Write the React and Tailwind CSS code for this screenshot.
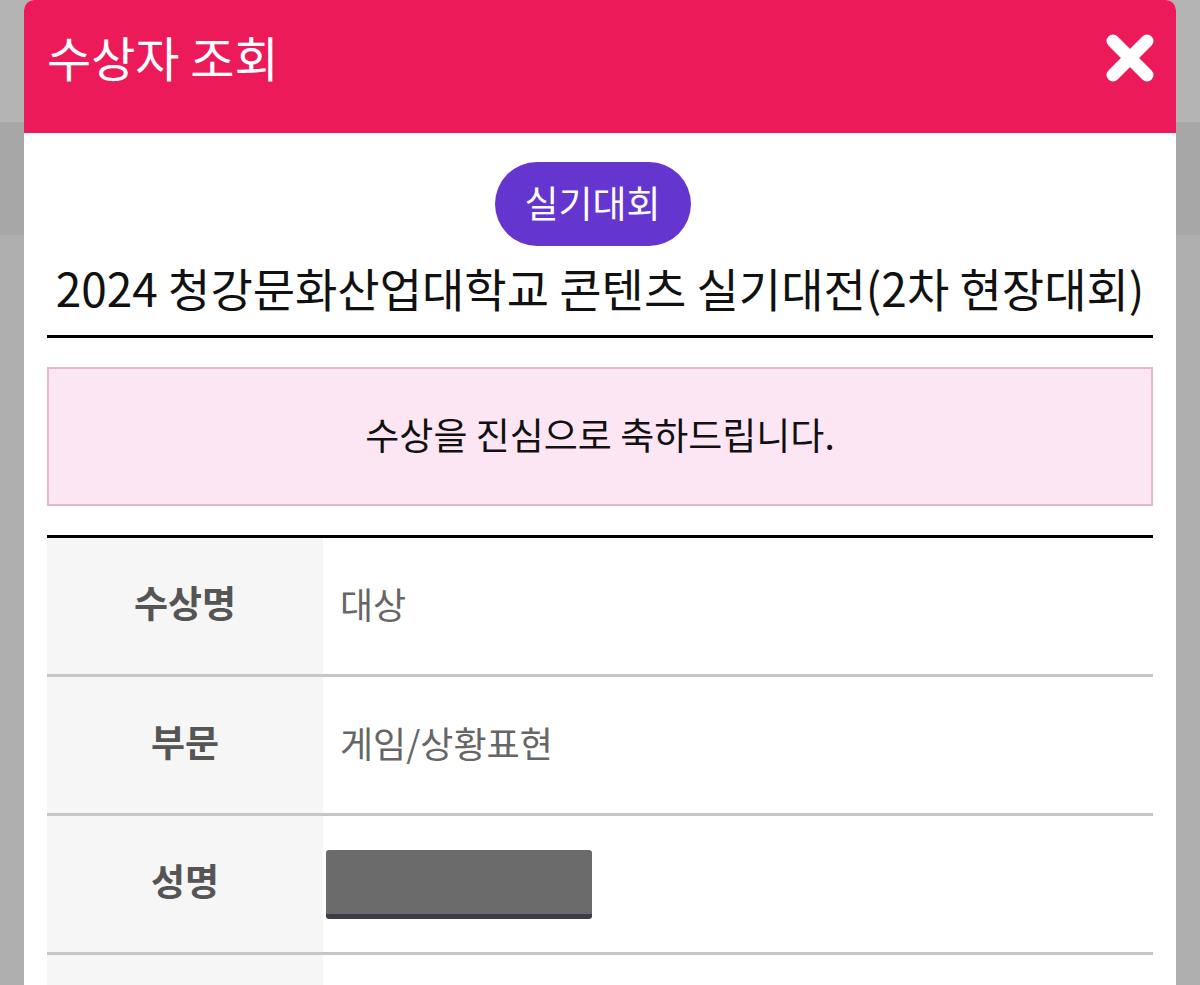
import React from "react";

const font = { fontFamily: '"Noto Sans CJK KR", "Noto Sans", sans-serif' };

function CloseIcon() {
  return (
    <svg width="50" height="50" viewBox="0 0 50 50" aria-hidden="true">
      <line x1="8" y1="8" x2="42" y2="42" stroke="white" strokeWidth="13" strokeLinecap="round" />
      <line x1="42" y1="8" x2="8" y2="42" stroke="white" strokeWidth="13" strokeLinecap="round" />
    </svg>
  );
}

function Row({ label, children }) {
  return (
    <div className="flex h-[139px] border-b-[3px] border-[#c6c6c6]">
      <div className="w-[276px] shrink-0 bg-[#f6f6f6] flex items-center justify-center pb-[7px] text-[37px] font-bold text-[#555555]">
        {label}
      </div>
      <div className="flex-1 flex items-center pl-[17px] pb-[7px] text-[36px] text-[#666666]">{children}</div>
    </div>
  );
}

export default function App() {
  return (
    <div className="relative w-[1200px] h-[985px] overflow-hidden bg-[#afafaf]" style={font}>
      <div className="flex flex-col">
        <div className="h-[122px] bg-[#b4b4b4]" />
        <div className="h-[113px] bg-[#a7a7a7]" />
      </div>
      <div className="absolute left-[24px] top-0 w-[1152px] h-[985px] rounded-t-[10px] overflow-hidden bg-white">
        <div className="h-[133px] bg-[#ed1a5a] flex items-center justify-between pl-[23px] pr-[21px] pb-[17px]">
          <span className="text-[48px] leading-none text-white mb-[5px]">수상자 조회</span>
          <CloseIcon />
        </div>
        <div className="px-[23px]">
          <div className="flex justify-center pt-[29px] pr-[15px]">
            <div className="h-[84px] w-[196px] rounded-full bg-[#6535cf] flex items-center justify-center pb-[2px] text-[37px] text-white">
              실기대회
            </div>
          </div>
          <div className="h-[92px] flex items-center justify-center pb-[7px] border-b-[3px] border-black text-[46px] text-[#111111] whitespace-nowrap">
            2024 청강문화산업대학교 콘텐츠 실기대전(2차 현장대회)
          </div>
          <div className="mt-[29px] h-[139px] bg-[#fde6f4] border-2 border-[#e4b8cf] flex items-center justify-center pb-[4px] text-[37px] text-[#111111]">
            수상을 진심으로 축하드립니다.
          </div>
          <div className="mt-[29px] border-t-[3px] border-black">
            <Row label="수상명">대상</Row>
            <Row label="부문">게임/상황표현</Row>
            <Row label="성명">
              <div className="-ml-[14px] mt-[7px] w-[266px] h-[69px] rounded-[3px] bg-[#6b6b6b] border-b-[5px] border-[#3d3d4a]" />
            </Row>
            <Row label="">&nbsp;</Row>
          </div>
        </div>
      </div>
    </div>
  );
}
